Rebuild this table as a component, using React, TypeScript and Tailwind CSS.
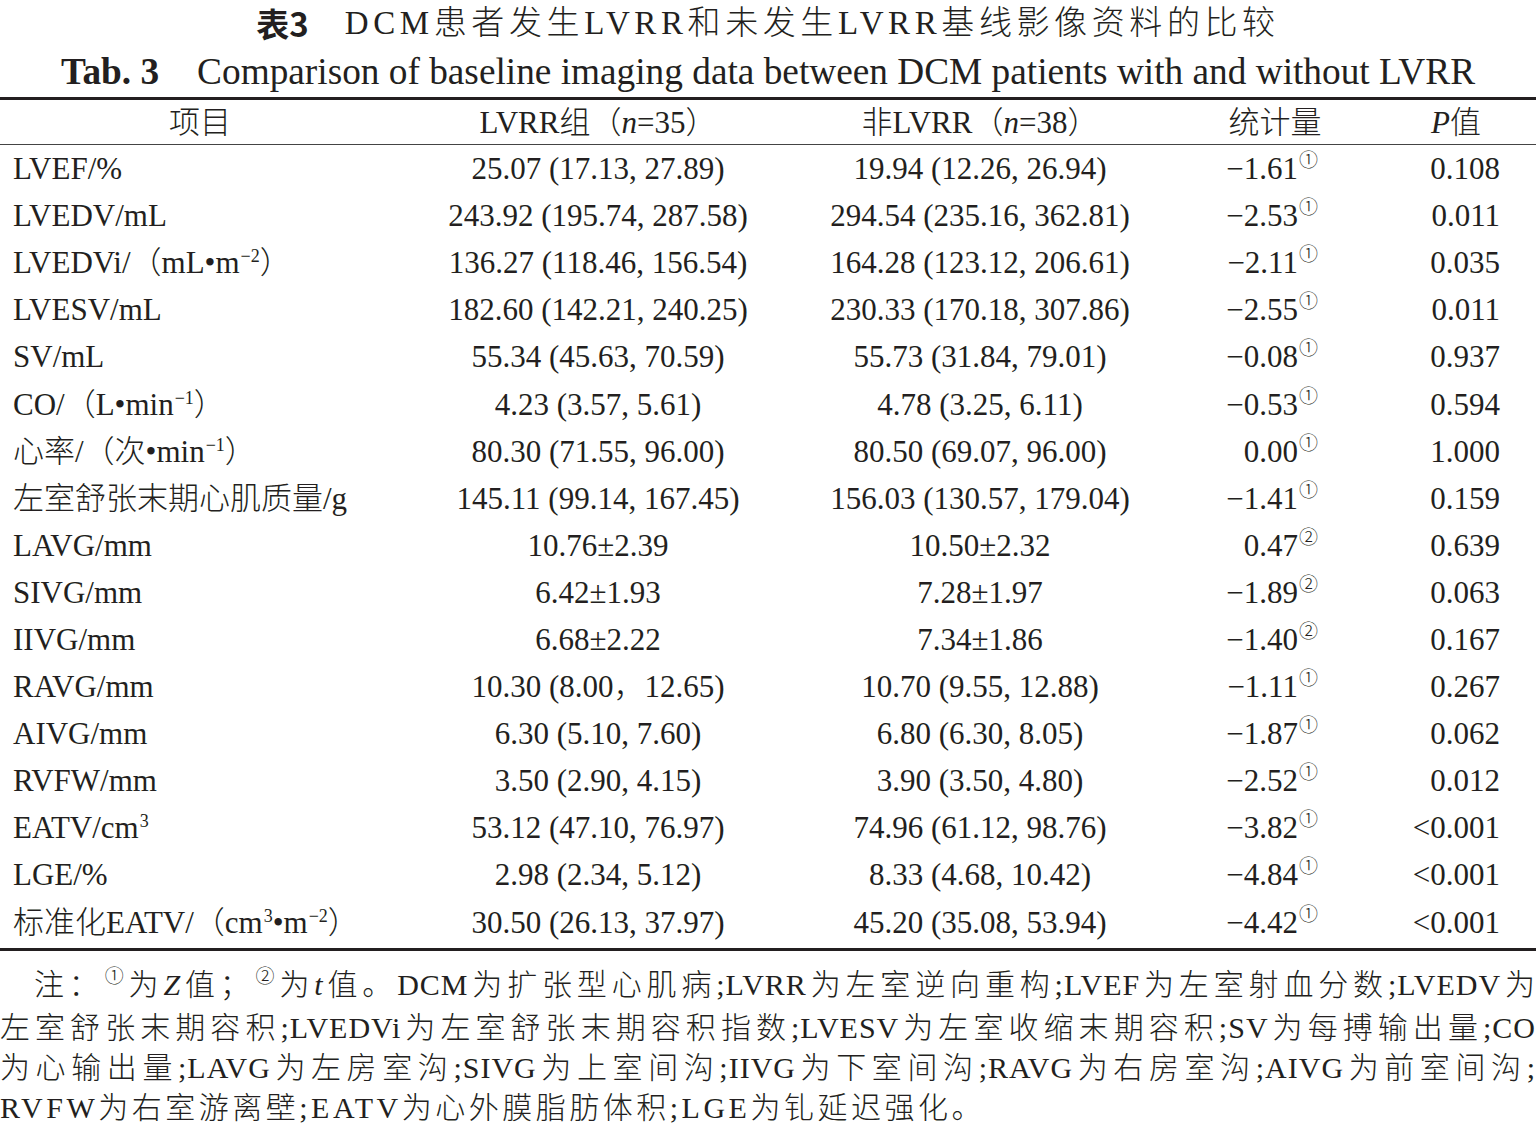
import type { ReactNode } from 'react';

type Row = {
  label: ReactNode;
  lvrr: string;
  non: string;
  stat: string;
  mark: '①' | '②';
  p: string;
};

const Sup = ({ children }: { children: ReactNode }) => (
  <span className="relative top-[-11px] text-[18px] ml-[1px]">{children}</span>
);

const Circ = ({ children }: { children: ReactNode }) => (
  <span className="relative top-[-12px] text-[19px] font-['DejaVu_Serif','Noto_Sans_CJK_SC',serif] ml-[1px]">
    {children}
  </span>
);

const rows: Row[] = [
  { label: 'LVEF/%', lvrr: '25.07 (17.13, 27.89)', non: '19.94 (12.26, 26.94)', stat: '−1.61', mark: '①', p: '0.108' },
  { label: 'LVEDV/mL', lvrr: '243.92 (195.74, 287.58)', non: '294.54 (235.16, 362.81)', stat: '−2.53', mark: '①', p: '0.011' },
  {
    label: (
      <>
        LVEDVi/（mL•m<Sup>−2</Sup>）
      </>
    ),
    lvrr: '136.27 (118.46, 156.54)',
    non: '164.28 (123.12, 206.61)',
    stat: '−2.11',
    mark: '①',
    p: '0.035',
  },
  { label: 'LVESV/mL', lvrr: '182.60 (142.21, 240.25)', non: '230.33 (170.18, 307.86)', stat: '−2.55', mark: '①', p: '0.011' },
  { label: 'SV/mL', lvrr: '55.34 (45.63, 70.59)', non: '55.73 (31.84, 79.01)', stat: '−0.08', mark: '①', p: '0.937' },
  {
    label: (
      <>
        CO/（L•min<Sup>−1</Sup>）
      </>
    ),
    lvrr: '4.23 (3.57, 5.61)',
    non: '4.78 (3.25, 6.11)',
    stat: '−0.53',
    mark: '①',
    p: '0.594',
  },
  {
    label: (
      <>
        心率/（次•min<Sup>−1</Sup>）
      </>
    ),
    lvrr: '80.30 (71.55, 96.00)',
    non: '80.50 (69.07, 96.00)',
    stat: '0.00',
    mark: '①',
    p: '1.000',
  },
  { label: '左室舒张末期心肌质量/g', lvrr: '145.11 (99.14, 167.45)', non: '156.03 (130.57, 179.04)', stat: '−1.41', mark: '①', p: '0.159' },
  { label: 'LAVG/mm', lvrr: '10.76±2.39', non: '10.50±2.32', stat: '0.47', mark: '②', p: '0.639' },
  { label: 'SIVG/mm', lvrr: '6.42±1.93', non: '7.28±1.97', stat: '−1.89', mark: '②', p: '0.063' },
  { label: 'IIVG/mm', lvrr: '6.68±2.22', non: '7.34±1.86', stat: '−1.40', mark: '②', p: '0.167' },
  { label: 'RAVG/mm', lvrr: '10.30 (8.00，12.65)', non: '10.70 (9.55, 12.88)', stat: '−1.11', mark: '①', p: '0.267' },
  { label: 'AIVG/mm', lvrr: '6.30 (5.10, 7.60)', non: '6.80 (6.30, 8.05)', stat: '−1.87', mark: '①', p: '0.062' },
  { label: 'RVFW/mm', lvrr: '3.50 (2.90, 4.15)', non: '3.90 (3.50, 4.80)', stat: '−2.52', mark: '①', p: '0.012' },
  {
    label: (
      <>
        EATV/cm<Sup>3</Sup>
      </>
    ),
    lvrr: '53.12 (47.10, 76.97)',
    non: '74.96 (61.12, 98.76)',
    stat: '−3.82',
    mark: '①',
    p: '<0.001',
  },
  { label: 'LGE/%', lvrr: '2.98 (2.34, 5.12)', non: '8.33 (4.68, 10.42)', stat: '−4.84', mark: '①', p: '<0.001' },
  {
    label: (
      <>
        标准化EATV/（cm<Sup>3</Sup>•m<Sup>−2</Sup>）
      </>
    ),
    lvrr: '30.50 (26.13, 37.97)',
    non: '45.20 (35.08, 53.94)',
    stat: '−4.42',
    mark: '①',
    p: '<0.001',
  },
];

const gridCols = 'grid grid-cols-[400px_396px_368px_222px_150px]';

export default function App() {
  return (
    <div className="w-[1536px] h-[1123px] overflow-hidden bg-white text-[#231f20] font-light font-['Liberation_Serif','Noto_Sans_CJK_SC',serif]">
      {/* Captions */}
      <div className="h-[46px] flex items-center justify-center text-[33px] tracking-[4.6px] leading-none">
        <span className="font-['Noto_Sans_CJK_SC',sans-serif] font-bold tracking-normal">表3</span>
        <span className="ml-[36px]">DCM患者发生LVRR和未发生LVRR基线影像资料的比较</span>
      </div>
      <div className="h-[51px] flex items-center justify-center text-[37.3px] leading-none">
        <span className="font-bold">Tab. 3</span>
        <span className="ml-[38px]">Comparison of baseline imaging data between DCM patients with and without LVRR</span>
      </div>

      {/* Table */}
      <div className="border-t-[3px] border-b-[3px] border-[#231f20] text-[31px] leading-none">
        <div className={`${gridCols} h-[45px] items-center border-b-[1.5px] border-[#444]`}>
          <div className="text-center">项目</div>
          <div className="text-center">
            LVRR组（<i>n</i>=35）
          </div>
          <div className="text-center">
            非LVRR（<i>n</i>=38）
          </div>
          <div className="text-center">统计量</div>
          <div className="text-center pr-[10px]">
            <i>P</i>值
          </div>
        </div>
        <div className="pb-[2px]">
          {rows.map((r, i) => (
            <div key={i} className={`${gridCols} h-[47.1px] items-center`}>
              <div className="pl-[13px] whitespace-nowrap">{r.label}</div>
              <div className="text-center whitespace-nowrap">{r.lvrr}</div>
              <div className="text-center whitespace-nowrap">{r.non}</div>
              <div className="text-right pr-[68px] whitespace-nowrap">
                {r.stat}
                <Circ>{r.mark}</Circ>
              </div>
              <div className="text-right pr-[36px]">{r.p}</div>
            </div>
          ))}
        </div>
      </div>

      {/* Notes */}
      <div className="pt-[14px] text-[30px] leading-[40.3px] tracking-[1px]">
        <div className="pl-[34px] text-justify [text-align-last:justify] whitespace-nowrap">
          注：<Circ>①</Circ>为<i>Z</i>值；<Circ>②</Circ>为<i>t</i>值。DCM为扩张型心肌病;LVRR为左室逆向重构;LVEF为左室射血分数;LVEDV为
        </div>
        <div className="text-justify [text-align-last:justify]">
          左室舒张末期容积;LVEDVi为左室舒张末期容积指数;LVESV为左室收缩末期容积;SV为每搏输出量;CO
        </div>
        <div className="text-justify [text-align-last:justify]">
          为心输出量;LAVG为左房室沟;SIVG为上室间沟;IIVG为下室间沟;RAVG为右房室沟;AIVG为前室间沟;
        </div>
        <div className="tracking-[3.5px]">RVFW为右室游离壁;EATV为心外膜脂肪体积;LGE为钆延迟强化。</div>
      </div>
    </div>
  );
}
